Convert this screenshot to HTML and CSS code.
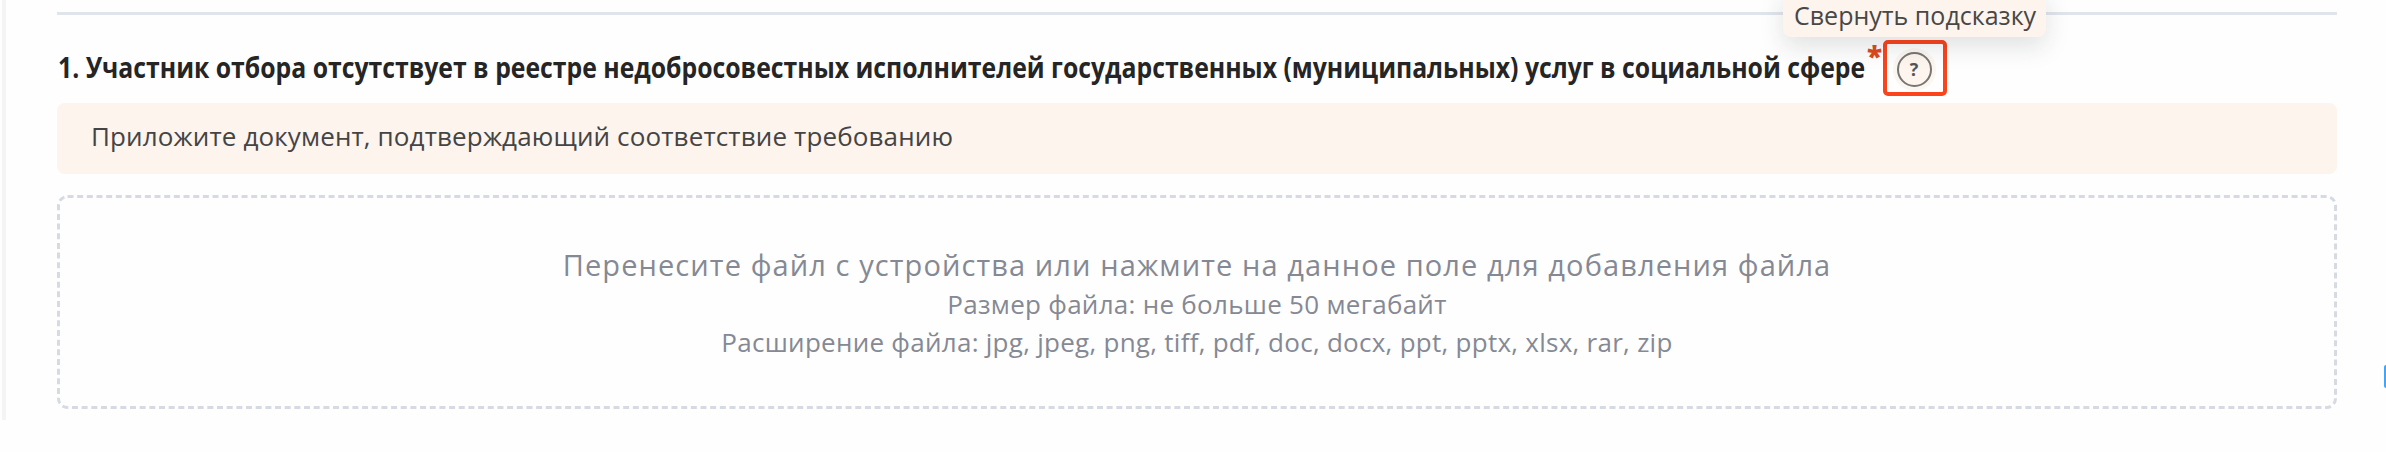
FILE: index.html
```
<!DOCTYPE html>
<html lang="ru">
<head>
<meta charset="utf-8">
<title>Требования к участнику отбора</title>
<link rel="stylesheet" href="styles.css">
</head>
<body>
<main class="panel">
  <hr class="divider">
  <section class="requirement">
    <header class="heading">
      <h2 class="title">1. Участник отбора отсутствует в реестре недобросовестных исполнителей государственных (муниципальных) услуг в социальной сфере</h2>
      <span class="required">*</span>
      <div class="help">
        <button class="help-button" type="button"><span class="help-icon">?</span></button>
        <div class="tooltip"><span class="tip">Свернуть подсказку</span></div>
      </div>
    </header>
    <div class="note"><span class="note-text">Приложите документ, подтверждающий соответствие требованию</span></div>
    <div class="dropzone">
      <svg class="outline" width="2280" height="214" viewBox="0 0 2280 214"><rect x="1.5" y="1.5" width="2277" height="211" rx="9"/></svg>
      <span class="drop-title">Перенесите файл с устройства или нажмите на данное поле для добавления файла</span>
      <span class="drop-meta">Размер файла: не больше 50 мегабайт</span>
      <span class="drop-meta types">Расширение файла: jpg, jpeg, png, tiff, pdf, doc, docx, ppt, pptx, xlsx, rar, zip</span>
    </div>
  </section>
</main>
<div class="side-tab"></div>
</body>
</html>
```
FILE: styles.css
```
* { box-sizing: border-box; }
body { position: relative; margin: 0; height: 452px; overflow: hidden; background: #fefefe; color: #444; font-family: "Open Sans", "Noto Sans", sans-serif; }
.panel { height: 420px; margin-left: 2px; padding: 12px 49px 0 51px; border-left: 4px solid #f4f4f5; }
.divider { height: 3px; margin: 0; border: 0; background: #e0e4eb; }
.heading { display: flex; height: 88px; padding-top: 25px; }
.title { margin: 0 0 0 1px; width: 1808px; font-size: 29px; line-height: 54px; font-weight: 700; color: #252525; white-space: nowrap; transform: scaleX(.8543); transform-origin: left; }
.required { width: 17px; padding-left: 1px; color: #dc4a20; font-size: 28px; font-weight: 800; line-height: 32px; }
.help { position: relative; width: 64px; height: 56px; }
.help-button { display: flex; align-items: center; justify-content: center; width: 64px; height: 56px; padding: 2px 2px 0 0; border: 4px solid #fb431c; border-radius: 5px; background: #fefefe; }
.help-icon { width: 35px; height: 35px; border: 2px solid #777674; border-radius: 50%; background: #fdf5ee; box-shadow: 0 0 0 4px #fcf6f1; color: #555; font: 700 18px/31px "Open Sans", sans-serif; text-align: center; }
.tooltip { position: absolute; left: -100px; top: -53px; width: 263px; height: 50px; padding-left: 11px; border-radius: 8px; background: #fcf4ed; box-shadow: 0 10px 24px rgba(30, 35, 50, .13); font-size: 26px; line-height: 57px; white-space: nowrap; color: #484746; }
.tip { display: inline-block; transform: scaleX(.962); transform-origin: left; }
.note { height: 71px; padding-left: 34px; border-radius: 8px; background: #fcf4ed; font-size: 26px; line-height: 67px; white-space: nowrap; }
.note-text { letter-spacing: .13px; }
.dropzone { position: relative; display: flex; flex-direction: column; align-items: center; height: 214px; margin-top: 21px; padding-top: 50px; color: #858994; white-space: nowrap; }
.outline { position: absolute; inset: 0; fill: none; stroke: #d6dae3; stroke-width: 3; stroke-dasharray: 6 3.67; }
.drop-title { height: 40px; font-size: 29px; line-height: 39px; letter-spacing: 1.1px; }
.drop-meta { font-size: 26px; line-height: 38px; letter-spacing: .28px; }
.types { letter-spacing: .27px; }
.side-tab { position: absolute; right: 0; top: 365px; width: 2px; height: 23px; border-radius: 3px 0 0 3px; background: #42a5f5; }
```
